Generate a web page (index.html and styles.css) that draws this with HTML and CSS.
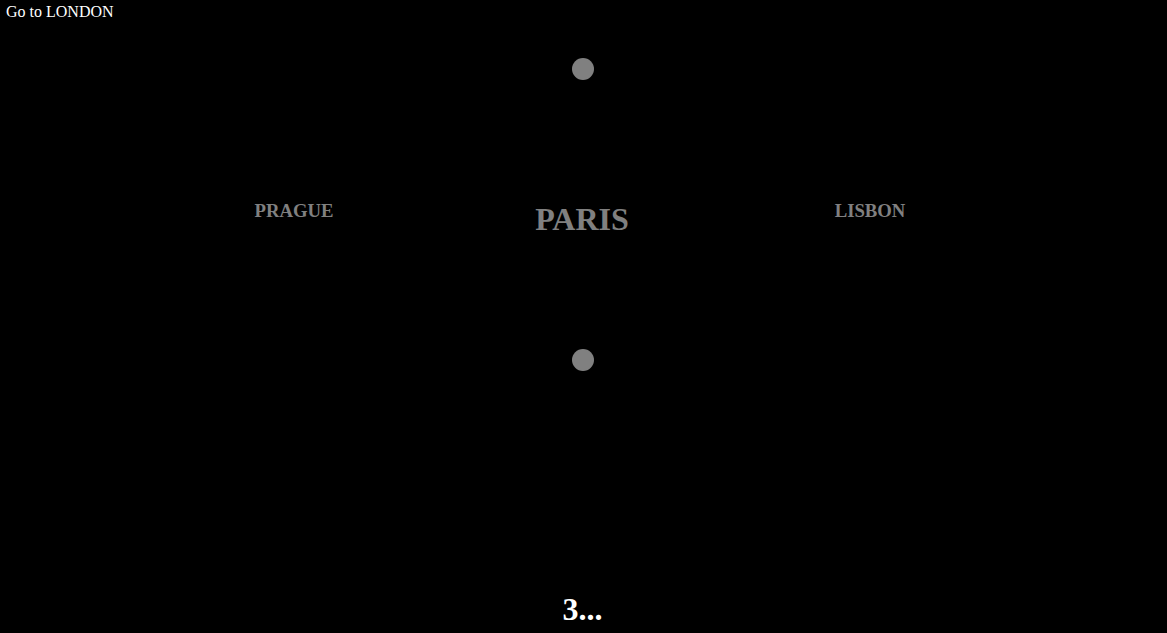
FILE: index.html
```html
<!DOCTYPE html>
<html>
<head>
<meta charset="utf-8">
<title>Compass</title>
<link rel="stylesheet" href="styles.css">
</head>
<body>
<div class="topbar"><a class="go-link" href="#">Go to LONDON</a></div>
<div class="compass">
  <div class="dot dot-top"></div>
  <div class="row">
    <div class="city city-side">PRAGUE</div>
    <div class="city city-main">PARIS</div>
    <div class="city city-side">LISBON</div>
  </div>
  <div class="dot dot-bottom"></div>
</div>
<div class="countdown">3...</div>
</body>
</html>
```

FILE: styles.css
```css
html, body {
  margin: 0;
  padding: 0;
  background: #000;
  height: 100%;
  overflow: hidden;
}
body {
  font-family: "Liberation Serif", "Times New Roman", serif;
  color: #fff;
}
.topbar {
  height: 20px;
  padding-left: 6px;
  padding-top: 3px;
  box-sizing: border-box;
  font-size: 16px;
  line-height: 18px;
}
.go-link {
  color: #fff;
  text-decoration: none;
}
.compass {
  display: flex;
  flex-direction: column;
  align-items: center;
  margin-left: -1px;
}
.dot {
  width: 22px;
  height: 22px;
  border-radius: 50%;
  background: #808080;
}
.dot-top {
  margin-top: 38px;
}
.row {
  display: grid;
  grid-template-columns: 288px 288px 288px;
  align-items: start;
  margin-top: 120px;
  margin-left: -2px;
}
.city {
  text-align: center;
  font-weight: bold;
  color: #808080;
}
.city-side {
  font-size: 18.72px;
  line-height: 21px;
}
.city-main {
  font-size: 32px;
  line-height: 36px;
  margin-top: 1px;
}
.dot-bottom {
  margin-top: 112px;
}
.countdown {
  margin-top: 220px;
  text-align: center;
  font-weight: bold;
  font-size: 32px;
  line-height: 37px;
  margin-left: -2px;
}
```
